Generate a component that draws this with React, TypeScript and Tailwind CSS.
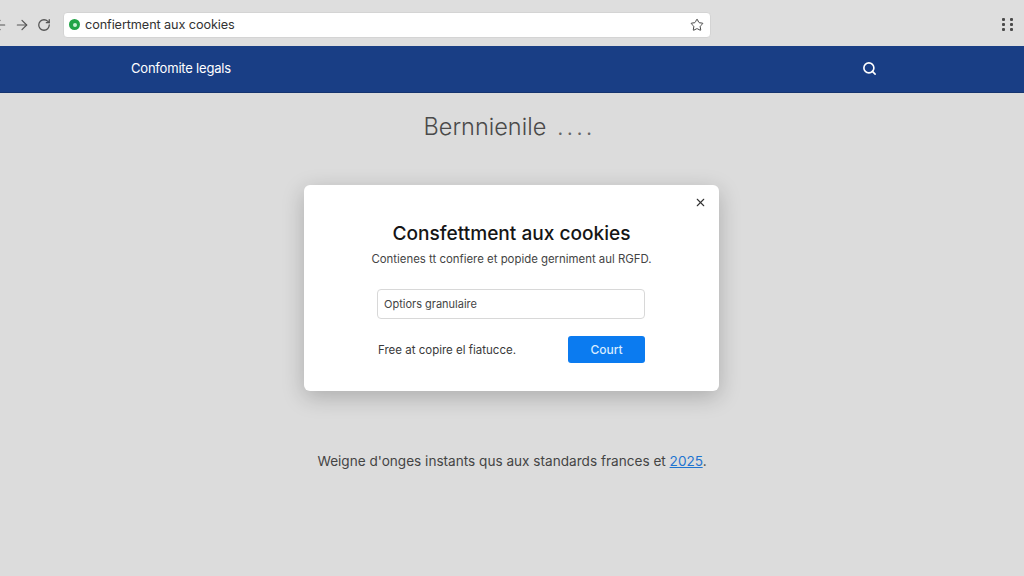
import React from 'react';
import { ArrowLeft, ArrowRight, RotateCw, Star, Search, X } from 'lucide-react';

const App: React.FC = () => {
  return (
    <div className="w-[1024px] h-[576px] overflow-hidden flex flex-col bg-[#dcdcdc] font-['Inter',sans-serif]">
      {/* Browser toolbar */}
      <div className="h-[46px] shrink-0 flex items-center bg-[#dedede] pt-[3px]">
        <div className="w-[63px] shrink-0 flex items-center text-[#555555] overflow-hidden">
          <ArrowLeft size={16} strokeWidth={1.8} className="ml-[-8px] shrink-0" />
          <ArrowRight size={16} strokeWidth={1.8} className="ml-[6px] shrink-0" />
          <RotateCw size={14} strokeWidth={2.2} className="ml-[7px] shrink-0" />
        </div>
        <div className="w-[648px] h-[26px] flex items-center bg-white rounded-[4px] border border-[#d4d4d4] pl-[5px] pr-[6px]">
          <span className="w-[11px] h-[11px] rounded-full bg-[#22a447] flex items-center justify-center shrink-0">
            <span className="w-[4px] h-[4px] rounded-full bg-[#c9f0d4]" />
          </span>
          <span className="ml-[5px] text-[12.7px] text-[#333333] tracking-[-0.1px]">confiertment aux cookies</span>
          <Star size={14} strokeWidth={1.6} className="ml-auto text-[#3a3a3a]" />
        </div>
        <div className="ml-auto mr-[11px] grid grid-cols-2 gap-x-[5px] gap-y-[2px]">
          {[...Array(6)].map((_, i) => (
            <span key={i} className="w-[3px] h-[3px] rounded-[1px] bg-[#4a4a4a]" />
          ))}
        </div>
      </div>

      {/* Site nav */}
      <nav className="h-[47px] shrink-0 flex items-center bg-[#193e85] border-b border-[#15346f] pl-[131px] pr-[147px]">
        <span className="text-[13px] font-normal text-white tracking-[-0.2px]">Confomite legals</span>
        <Search size={15} strokeWidth={2.6} className="ml-auto mt-[-2px] text-white" />
      </nav>

      {/* Page content */}
      <main className="flex-1 flex flex-col items-center">
        <h1 className="mt-[18px] ml-[-5px] h-[32px] leading-[32px] text-[23.5px] font-light text-[#4a4a4a] whitespace-pre">
          Bernnienile <span className="ml-[4px] text-[#666666] tracking-[3px]">....</span>
        </h1>

        <div className="relative mt-[42px] ml-[-1px] w-[415px] h-[206px] shrink-0 rounded-[6px] bg-white shadow-[0_6px_22px_rgba(0,0,0,0.22)] flex flex-col items-center">
          <X size={13} strokeWidth={2} className="absolute top-[11px] right-[12px] text-[#333333]" />
          <h2 className="mt-[36px] text-[19.1px] leading-[24px] font-medium text-[#151515]">Consfettment aux cookies</h2>
          <p className="mt-[6px] text-[11.4px] leading-[16px] text-[#444444]">Contienes tt confiere et popide gerniment aul RGFD.</p>
          <div className="mt-[22px] ml-[-1px] w-[268px] h-[30px] flex items-center rounded-[4px] border border-[#d8d8d8] px-[6px] text-[11px] text-[#444444]">
            Optiors granulaire
          </div>
          <div className="mt-[17px] ml-[-1px] w-[268px] flex items-center justify-between">
            <span className="mt-[2px] ml-[1px] text-[11.5px] text-[#3a3a3a]">Free at copire el fiatucce.</span>
            <button className="w-[77px] h-[27px] rounded-[3px] bg-[#0b7bf0] text-[12px] font-medium text-[#d8ecff]">Court</button>
          </div>
        </div>

        <p className="mt-[59px] text-[13.6px] leading-[22px] text-[#444444]">
          Weigne d'onges instants qus aux standards frances et <a className="text-[#1f74d0] underline">2025</a>.
        </p>
      </main>
    </div>
  );
};

export default App;
